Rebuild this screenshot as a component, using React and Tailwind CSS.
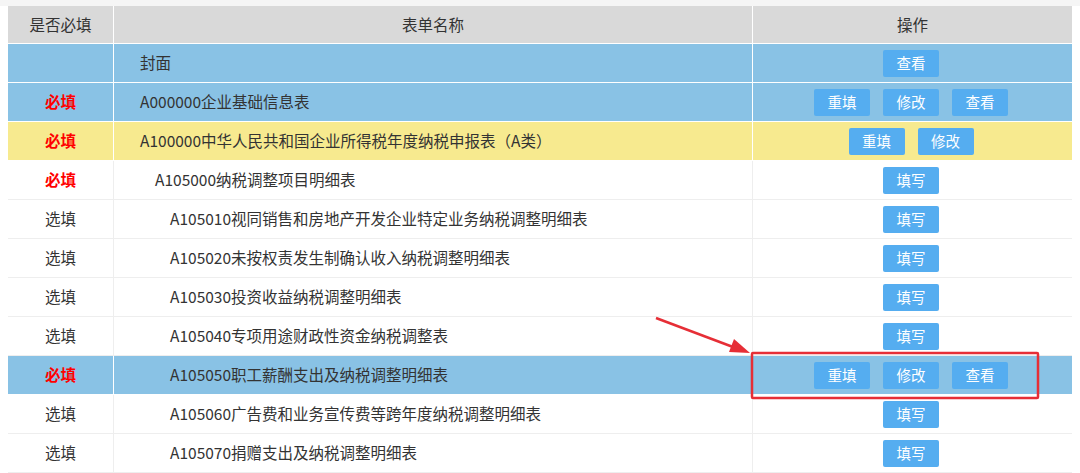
const rows = [
  { req: "", name: "封面", level: 0, bg: "blue", ops: ["查看"] },
  { req: "必填", name: "A000000企业基础信息表", level: 0, bg: "blue", ops: ["重填", "修改", "查看"] },
  { req: "必填", name: "A100000中华人民共和国企业所得税年度纳税申报表（A类）", level: 0, bg: "yellow", ops: ["重填", "修改"] },
  { req: "必填", name: "A105000纳税调整项目明细表", level: 1, bg: "white", ops: ["填写"] },
  { req: "选填", name: "A105010视同销售和房地产开发企业特定业务纳税调整明细表", level: 2, bg: "white", ops: ["填写"] },
  { req: "选填", name: "A105020未按权责发生制确认收入纳税调整明细表", level: 2, bg: "white", ops: ["填写"] },
  { req: "选填", name: "A105030投资收益纳税调整明细表", level: 2, bg: "white", ops: ["填写"] },
  { req: "选填", name: "A105040专项用途财政性资金纳税调整表", level: 2, bg: "white", ops: ["填写"] },
  { req: "必填", name: "A105050职工薪酬支出及纳税调整明细表", level: 2, bg: "blue", ops: ["重填", "修改", "查看"] },
  { req: "选填", name: "A105060广告费和业务宣传费等跨年度纳税调整明细表", level: 2, bg: "white", ops: ["填写"] },
  { req: "选填", name: "A105070捐赠支出及纳税调整明细表", level: 2, bg: "white", ops: ["填写"] },
];

const bgClass = {
  blue: "bg-[#89c2e5] border-white",
  yellow: "bg-[#f7ea8f] border-white",
  white: "bg-white border-[#eeeeee]",
};

const indent = ["pl-[26px]", "pl-[41px]", "pl-[56px]"];

function Btn({ label }) {
  return (
    <button className="w-[56px] h-[27px] rounded-[2px] bg-[#55adf0] text-white text-[14.5px] leading-none">
      {label}
    </button>
  );
}

export default function App() {
  return (
    <div
      className="relative w-[1080px] h-[473px] overflow-hidden bg-white text-[#333]"
      style={{ fontFamily: '"Noto Sans CJK SC", "Noto Sans", sans-serif' }}
    >
      <div className="h-[6px] bg-[#f5f5f5]" />
      <div className="ml-[8px] w-[1064px]">
        <div className="grid grid-cols-[106px_639px_319px] h-[38px] bg-[#d9d9d9] border-b border-white text-[15.5px]">
          <div className="flex items-center justify-center border-r border-white">是否必填</div>
          <div className="flex items-center justify-center border-r border-white">表单名称</div>
          <div className="flex items-center justify-center">操作</div>
        </div>
        {rows.map((r, i) => (
          <div
            key={i}
            className={`grid grid-cols-[106px_639px_319px] h-[39px] border-b text-[15.5px] ${bgClass[r.bg]}`}
          >
            <div className={`flex items-center justify-center border-r ${bgClass[r.bg]}`}>
              {r.req === "必填" ? (
                <span className="text-[#ff0000] font-bold">必填</span>
              ) : (
                <span>{r.req}</span>
              )}
            </div>
            <div className={`flex items-center border-r ${indent[r.level]} ${bgClass[r.bg]}`}>
              {r.name}
            </div>
            <div className="flex items-center justify-center gap-[13px] pr-[3px]">
              {r.ops.map((o) => (
                <Btn key={o} label={o} />
              ))}
            </div>
          </div>
        ))}
      </div>

      {/* annotation */}
      <svg className="absolute left-0 top-0 pointer-events-none" width="1080" height="473">
        <line x1="656" y1="318" x2="733" y2="347" stroke="#e62e36" strokeWidth="2.5" />
        <polygon points="750,353 734,339 729,352" fill="#e62e36" />
        <rect x="752" y="353" width="286" height="45" fill="none" stroke="#e62e36" strokeWidth="2.5" rx="1" />
      </svg>
    </div>
  );
}
